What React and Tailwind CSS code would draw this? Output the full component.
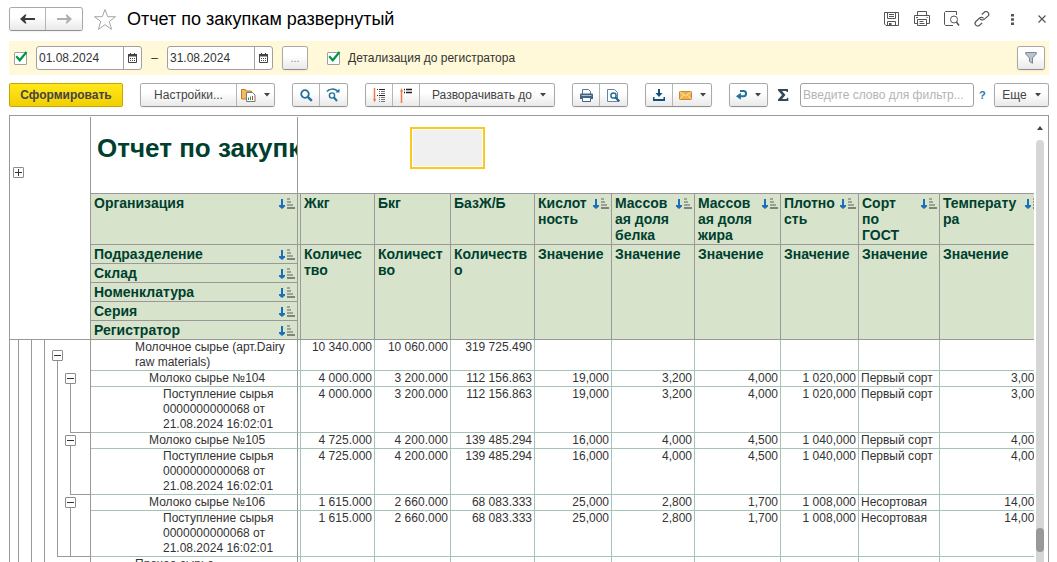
import React, { useState } from 'react';

const columns = [
  { title: 'Жкг', sub: 'Количес\nтво' },
  { title: 'Бкг', sub: 'Количест\nво' },
  { title: 'БазЖ/Б', sub: 'Количеств\nо' },
  { title: 'Кислот\nность', sub: 'Значение', sort: true },
  { title: 'Массов\nая доля\nбелка', sub: 'Значение', sort: true },
  { title: 'Массов\nая доля\nжира', sub: 'Значение', sort: true },
  { title: 'Плотно\nсть', sub: 'Значение', sort: true },
  { title: 'Сорт\nпо\nГОСТ', sub: 'Значение', sort: true },
  { title: 'Температу\nра', sub: 'Значение', sort: true },
];

const groupRows = ['Подразделение', 'Склад', 'Номенклатура', 'Серия', 'Регистратор'];

const receipt = 'Поступление сырья 0000000000068 от 21.08.2024 16:02:01';

const v104 = ['4 000.000', '3 200.000', '112 156.863', '19,000', '3,200', '4,000', '1 020,000', 'Первый сорт', '3,000'];
const v105 = ['4 725.000', '4 200.000', '139 485.294', '16,000', '4,000', '4,500', '1 040,000', 'Первый сорт', '4,000'];
const v106 = ['1 615.000', '2 660.000', '68 083.333', '25,000', '2,800', '1,700', '1 008,000', 'Несортовая', '14,000'];

// outer / inner describe the two deepest levels of the group tree:
// open = toggle, line = guide, end = guide that closes the group
const rows = [
  { name: 'Молочное сырье (арт.Dairy raw materials)', level: 0, outer: 'open', values: ['10 340.000', '10 060.000', '319 725.490', '', '', '', '', '', ''] },
  { name: 'Молоко сырье №104', level: 1, outer: 'line', inner: 'open', values: v104 },
  { name: receipt, level: 2, outer: 'line', inner: 'end', values: v104 },
  { name: 'Молоко сырье №105', level: 1, outer: 'line', inner: 'open', values: v105 },
  { name: receipt, level: 2, outer: 'line', inner: 'end', values: v105 },
  { name: 'Молоко сырье №106', level: 1, outer: 'line', inner: 'open', values: v106 },
  { name: receipt, level: 2, outer: 'end', inner: 'end', values: v106 },
  { name: 'Прочее сырье', level: 0, values: ['', '', '', '', '', '', '', '', ''] },
];

const indents = ['pl-[44px]', 'pl-[58px]', 'pl-[72px]'];

const buttonLook = 'flex items-center justify-center bg-linear-to-b from-white from-40% to-[#e9e9e9] text-[#444]';
const groupLook = 'flex h-6 shrink-0 divide-x divide-[#b5b5b5] overflow-hidden rounded-[3px] border border-[#a9a9a9] border-b-[#8f8f8f] shadow-xs';

const Caret = () => (
  <svg width="6" height="4" viewBox="0 0 6 4" fill="#444">
    <path d="M0 0h6L3 3.5z" />
  </svg>
);

const SortIcon = () => (
  <svg width="17" height="12" viewBox="0 0 17 12" className="block">
    <path d="M3 1h2v6h2v1.500L4 11 1 8.500V7h2z" fill="#1a6fb8" />
    <path d="M9 1h3M9 4h4M9 7h6" stroke="#9aa396" strokeWidth="2" />
    <path d="M9 10h8" stroke="#5f6660" strokeWidth="1.500" />
  </svg>
);

const Toggle = ({ plus, className = '' }) => (
  <button
    type="button"
    aria-label={plus ? 'Развернуть' : 'Свернуть'}
    className={`block size-[11px] shrink-0 rounded-[1px] border border-[#8c8c8c] bg-white ${className}`}
  >
    <svg width="9" height="9" viewBox="0 0 9 9" stroke="#333" className="block">
      <path d={plus ? 'M1 4.5h7M4.5 1v7' : 'M1 4.5h7'} />
    </svg>
  </button>
);

const TreeSlot = ({ kind, level }) => (
  <div className="flex w-[13px] flex-col items-end">
    {kind === 'open' && <Toggle className={level === 0 ? 'mt-[10px] -mr-[5px]' : 'mt-[2px] -mr-[5px]'} />}
    {kind && <div className="w-px grow bg-[#999]" />}
  </div>
);

const TreeCell = ({ row }) => (
  <td className="h-px border-r border-[#999] p-0">
    <div className="flex h-full">
      <div className="w-[9px] border-r border-[#999]" />
      <div className="w-[13px] border-r border-[#999]" />
      <div className="w-[13px] border-r border-[#999]" />
      <TreeSlot kind={row.outer} level={row.level} />
      <div className={`flex grow ${row.outer === 'end' ? 'border-b border-[#999]' : ''}`}>
        <TreeSlot kind={row.inner} level={row.level} />
        <div className={`grow ${row.inner === 'end' && row.outer !== 'end' ? 'border-b border-[#999]' : ''}`} />
      </div>
    </div>
  </td>
);

const Check = ({ id, label }) => (
  <span className="relative block size-[13px]">
    <input
      id={id}
      type="checkbox"
      defaultChecked
      aria-label={label}
      className="peer block size-[13px] appearance-none rounded-[1px] border border-[#a0a0a0] bg-white"
    />
    <svg
      width="13"
      height="12"
      viewBox="0 0 13 12"
      fill="none"
      stroke="#009646"
      strokeWidth="2.2"
      className="pointer-events-none absolute -top-px left-px hidden peer-checked:block"
    >
      <path d="M1.2 5.2L4.8 9.2 11.5 1" />
    </svg>
  </span>
);

const DateField = ({ label, value }) => (
  <div className="flex h-6 w-[106px] overflow-hidden rounded-[3px] border border-[#a0a0a0] bg-white">
    <input
      type="text"
      aria-label={label}
      defaultValue={value}
      className="w-full min-w-0 grow px-[2px] text-[12px] text-[#333] outline-none"
    />
    <button type="button" aria-label="Выбрать дату" className="flex w-[18px] shrink-0 items-center justify-center border-l border-[#a0a0a0]">
      <svg width="9" height="10" viewBox="0 0 9 10">
        <path d="M.5 1.5h8v8h-8z" fill="#fff" stroke="#444" />
        <path d="M0 1h9v2.5H0zM2 0h1v2H2zM6 0h1v2H6z" fill="#444" />
        <path d="M2 5.5h1M4 5.5h1M6 5.5h1M2 7.5h1M4 7.5h1M6 7.5h1" stroke="#444" />
      </svg>
    </button>
  </div>
);

const IconButton = ({ label, className = 'w-[27px]', children }) => (
  <button type="button" aria-label={label} className={`${buttonLook} ${className}`}>
    {children}
  </button>
);

const TitleBar = () => (
  <header className="flex h-6 items-center">
    <div className={groupLook}>
      <IconButton label="Назад" className="w-9">
        <svg width="15" height="10" viewBox="0 0 15 10" fill="#3c3c3c">
          <path d="M0 5L5 .5h1.500L5 4h10v2H5l1.500 3.500H5z" />
        </svg>
      </IconButton>
      <IconButton label="Вперед" className="w-9">
        <svg width="15" height="10" viewBox="0 0 15 10" fill="#b0b0b0">
          <path d="M15 5L10 .5H8.500L10 4H0v2h10L8.500 9.500H10z" />
        </svg>
      </IconButton>
    </div>
    <button type="button" aria-label="В избранное" className="ml-[10px]">
      <svg width="24" height="23" viewBox="0 0 24 23" fill="#fff" stroke="#a5a5a5" className="block">
        <path d="M12 1.5l2.7 7.2h7.8l-6.2 4.8 2.3 7.9L12 16.7l-6.6 4.7 2.3-7.9L1.5 8.7h7.8z" />
      </svg>
    </button>
    <h1 className="ml-[10px] grow truncate text-[18px] leading-6 text-black">Отчет по закупкам развернутый</h1>
    <div className="flex items-center gap-[14px] pr-[3px]">
      <button type="button" aria-label="Сохранить">
        <svg width="16" height="16" viewBox="0 0 16 16" fill="none" stroke="#555" className="block">
          <path d="M.5 1.500h14v13H2l-1.500-1.500z" />
          <path d="M3.500 1.500v6h8v-6M5 3.500h5M5 5.500h5M3.500 14.500v-4h8v4" />
          <path d="M5 12h2.500v2.500H5z" fill="#555" stroke="none" />
        </svg>
      </button>
      <button type="button" aria-label="Печать">
        <svg width="16" height="16" viewBox="0 0 16 16" fill="none" stroke="#555" className="block">
          <path d="M3.500 4.500v-4h9v4M3.500 12.500h-3v-8h15v8h-3" />
          <path d="M3.500 8.500h9v6h-9zM5.500 10.500h4M5.500 12.500h5M2 6.500h2M12.500 6.500h1" />
        </svg>
      </button>
      <button type="button" aria-label="Просмотр">
        <svg width="16" height="16" viewBox="0 0 16 16" fill="none" stroke="#555" className="block">
          <path d="M9 14.500H1.500l-1-1v-12l1-1h11v3.500" />
          <circle cx="10" cy="8.500" r="3.500" />
          <path d="M12.500 11l2.500 3.500" strokeWidth="1.500" />
        </svg>
      </button>
      <button type="button" aria-label="Ссылка">
        <svg width="16" height="16" viewBox="0 0 16 16" fill="none" stroke="#555" strokeWidth="1.200" className="block">
          <path d="M6.200 7.800a2.800 2.800 0 0 0 4 .6l3.700-3.300a2.600 2.600 0 0 0-3.600-3.800L7.800 3.500" />
          <path d="M9.600 7.400a2.800 2.800 0 0 0-4-.4L1.900 10.500a2.600 2.600 0 0 0 3.600 3.800l2.700-2.400" />
        </svg>
      </button>
      <button type="button" aria-label="Еще действия" className="flex w-4 justify-center">
        <svg width="3" height="11" viewBox="0 0 3 11" fill="#555">
          <path d="M0 0h3v2.500H0zM0 4.200h3v2.500H0zM0 8.500h3V11H0z" />
        </svg>
      </button>
      <button type="button" aria-label="Закрыть" className="flex w-3 justify-end">
        <svg width="8" height="8" viewBox="0 0 8 8" stroke="#555" strokeWidth="1.200">
          <path d="M.5.5l7 7M7.500.5l-7 7" />
        </svg>
      </button>
    </div>
  </header>
);

const FilterBar = () => (
  <div className="mt-[10px] flex h-[35px] items-center bg-[#fff9d9] pr-[4px] pl-[5px]">
    <Check id="period" label="Период" />
    <div className="ml-[9px] flex items-center gap-[9px]">
      <DateField label="Начало периода" value="01.08.2024" />
      <span className="w-[7px] text-center">–</span>
      <DateField label="Конец периода" value="31.08.2024" />
      <div className={groupLook}>
        <IconButton label="Выбрать период" className="w-6 text-[11px] text-[#888]">...</IconButton>
      </div>
    </div>
    <div className="ml-[19px] flex items-center gap-[8px]">
      <Check id="detail" />
      <label htmlFor="detail">Детализация до регистратора</label>
    </div>
    <div className={`${groupLook} ml-auto`}>
      <IconButton label="Отбор" className="w-[26px]">
        <svg width="12" height="12" viewBox="0 0 12 12" fill="#b9c3cc" stroke="#7c8790">
          <path d="M.7.5h10.600v1.500L7.500 6v5.300L4.500 9.500V6L.7 2z" />
        </svg>
      </IconButton>
    </div>
  </div>
);

const Toolbar = () => {
  const [filter, setFilter] = useState('');
  return (
    <div className="mt-[8px] flex h-6 items-center gap-[17px]">
      <button
        type="button"
        className="h-6 w-[114px] shrink-0 rounded-[2px] border border-[#c9a500] bg-linear-to-b from-[#ffe81a] to-[#f2cf00] text-[12px] font-bold text-[#444]"
      >
        Сформировать
      </button>
      <div className={groupLook}>
        <button type="button" className={`${buttonLook} w-[96px] text-[12px]`}>Настройки...</button>
        <IconButton label="Варианты отчета" className="w-[37px] gap-2">
          <svg width="15" height="14" viewBox="0 0 15 14">
            <path d="M.5 1.500h4l1 1.500h5v8H.5z" fill="#f0bc62" stroke="#b98227" />
            <path d="M5.500 4.500h6l2.500 2.500v6.500H5.500z" fill="#fff" stroke="#777" />
            <path d="M7.500 12V9.500M9.500 12V8.500" stroke="#2a9448" />
            <path d="M11.500 12v-4" stroke="#d33" />
          </svg>
          <Caret />
        </IconButton>
      </div>
      <div className={groupLook}>
        <IconButton label="Найти">
          <svg width="13" height="13" viewBox="0 0 13 13" fill="none" stroke="#21709f" strokeWidth="1.800">
            <circle cx="5" cy="5" r="3.800" />
            <path d="M7.800 7.800l4 4" strokeWidth="2.400" />
          </svg>
        </IconButton>
        <IconButton label="Найти далее">
          <svg width="15" height="14" viewBox="0 0 15 14" fill="none" stroke="#21709f">
            <path d="M1 3.500C3 .7 8 .2 11.500 2.800" strokeWidth="1.500" />
            <path d="M9.500 4.500h4v-4z" fill="#21709f" stroke="none" />
            <circle cx="6" cy="7.500" r="2.600" strokeWidth="1.400" />
            <path d="M8 9.500l3 3.500" strokeWidth="2" />
          </svg>
        </IconButton>
      </div>
      <div className={groupLook}>
        <IconButton label="Развернуть все">
          <svg width="13" height="15" viewBox="0 0 13 15" fill="none">
            <path d="M1.500 0v12" stroke="#ee7b4c" strokeWidth="1.500" />
            <path d="M0 11h3.200L1.600 14.500z" fill="#ee7b4c" />
            <path d="M4 1.500h1M6 1.500h6M4 7.500h1M6 7.500h6" stroke="#222" />
            <path d="M6 3.500h1M8 3.500h4M6 5.500h1M8 5.500h4M6 9.500h1M8 9.500h4M6 11.500h1M8 11.500h4M6 13.500h1M8 13.500h4" stroke="#777" />
          </svg>
        </IconButton>
        <IconButton label="Свернуть все">
          <svg width="13" height="15" viewBox="0 0 13 15" fill="none">
            <path d="M1.500 3v12" stroke="#ee7b4c" strokeWidth="1.500" />
            <path d="M0 3.500h3.200L1.600 0z" fill="#ee7b4c" />
            <path d="M4 1.500h1M6 1.500h6M4 4.500h1M6 4.500h6" stroke="#222" strokeWidth="1.500" />
          </svg>
        </IconButton>
        <button type="button" className={`${buttonLook} w-[134px] gap-2 pl-1 text-[12px]`}>
          Разворачивать до <Caret />
        </button>
      </div>
      <div className={groupLook}>
        <IconButton label="Печать">
          <svg width="13" height="13" viewBox="0 0 13 13">
            <path d="M2.500 5V.5h6l2 2V5" fill="#fff" stroke="#5f7486" />
            <path d="M0 5.500Q0 4.500 1 4.500h11q1 0 1 1V10H0z" fill="#3f6484" />
            <path d="M1.500 6.500h10" stroke="#a9bfd0" />
            <path d="M2.500 8.500h8v4h-8z" fill="#fff" stroke="#3f6484" />
          </svg>
        </IconButton>
        <IconButton label="Просмотр">
          <svg width="13" height="13" viewBox="0 0 13 13" fill="none">
            <path d="M.5.500h7l3 3v9H.5z" fill="#fff" stroke="#6d8496" />
            <circle cx="6.500" cy="6.500" r="2.600" stroke="#21709f" strokeWidth="1.500" />
            <path d="M8.300 8.300l4 4.200" stroke="#1b5f8c" strokeWidth="2" />
          </svg>
        </IconButton>
      </div>
      <div className={groupLook}>
        <IconButton label="Сохранить">
          <svg width="12" height="12" viewBox="0 0 12 12" fill="#14507c">
            <path d="M5 0h2v4h2.500L6 8 2.500 4H5zM0 8h1.500v2h9V8H12v4H0z" />
          </svg>
        </IconButton>
        <IconButton label="Отправить" className="w-[38px] gap-2">
          <svg width="13" height="9" viewBox="0 0 13 9">
            <path d="M.5.500h12v8H.5z" fill="#efb24c" stroke="#cb8a26" />
            <path d="M.5.500l6 4.500 6-4.500M.5 8.500L4.500 4M12.500 8.500L8.500 4" fill="none" stroke="#fbe3b0" />
          </svg>
          <Caret />
        </IconButton>
      </div>
      <div className={groupLook}>
        <IconButton label="Изменить" className="w-[37px] gap-2">
          <svg width="11" height="10" viewBox="0 0 11 10">
            <path d="M4 1h3.500a2.500 2.500 0 0 1 0 5.200H4" fill="none" stroke="#21709f" strokeWidth="2" />
            <path d="M0 6.200L4.800 2.800v7z" fill="#21709f" />
          </svg>
          <Caret />
        </IconButton>
      </div>
      <div className="-ml-[7px] flex min-w-0 grow items-center">
        <button type="button" aria-label="Сумма" className="shrink-0">
          <svg width="11" height="12" viewBox="0 0 11 12" fill="#34495a" className="block">
            <path d="M0 0h10v3H8.500V2H4l3.500 4L4 10h4.800V8.800h1.500V12H0v-1.500L4 6 0 1.500z" />
          </svg>
        </button>
        <input
          type="text"
          aria-label="Фильтр"
          placeholder="Введите слово для фильтр..."
          value={filter}
          onChange={(e) => setFilter(e.target.value)}
          className="ml-[11px] h-6 min-w-0 grow rounded-[3px] border border-[#a0a0a0] bg-white px-[2px] text-[12px] outline-none placeholder:text-[#b4b4b4]"
        />
        <a href="#help" className="ml-[5px] w-[6px] shrink-0 text-[11px] font-bold text-[#1f78b8]">?</a>
        <div className={`${groupLook} ml-[9px]`}>
          <button type="button" className={`${buttonLook} w-[53px] gap-2 text-[12px]`}>
            Еще <Caret />
          </button>
        </div>
      </div>
    </div>
  );
};

const headCell = 'border-r border-b border-[#999] bg-[#d7e4cb] py-px pr-[2px] pl-[3px] text-left align-top font-bold whitespace-pre-line';

const HeadContent = ({ title, sort }) => (
  <div className="flex items-start justify-between">
    <span>{title}</span>
    {sort && (
      <button type="button" aria-label="Сортировать" className="-ml-2 shrink-0 pt-[3px]">
        <SortIcon />
      </button>
    )}
  </div>
);

const ReportTable = () => (
  <table className="w-[1034px] table-fixed border-separate border-spacing-0 text-[12px] leading-[15px] text-[#333]">
    <colgroup>
      <col className="w-[81px]" />
      <col className="w-[207px]" />
      <col className="w-[3px]" />
      <col className="w-[74px]" />
      <col className="w-[76px]" />
      <col className="w-[84px]" />
      <col className="w-[77px]" />
      <col className="w-[83px]" />
      <col className="w-[86px]" />
      <col className="w-[78px]" />
      <col className="w-[81px]" />
      <col className="w-[104px]" />
    </colgroup>
    <thead className="text-[14px] leading-4 text-[#003f2f]">
      <tr>
        <td rowSpan={7} className="border-r border-b border-[#999] p-0 pt-[50px] pl-[3px] align-top">
          <Toggle plus />
        </td>
        <td className="h-[77px] overflow-hidden border-r border-b border-[#999] py-0 pr-0 pb-[14px] pl-[6px] text-[26px] leading-8 font-bold whitespace-nowrap">
          Отчет по закупкам
        </td>
        <td className="border-b border-[#999] p-0" />
        <td colSpan={9} className="border-b border-[#999] p-0 pt-[10px] align-top">
          <div className="ml-[109px] h-[42px] w-[75px] border-2 border-[#fac81e] bg-white p-px">
            <div className="h-full bg-[#f0f0f0]" />
          </div>
        </td>
      </tr>
      <tr>
        <th className={headCell}>
          <HeadContent title="Организация" sort />
        </th>
        <td className="border-r border-b border-[#999] bg-[#d7e4cb] p-0" />
        {columns.map((col) => (
          <th key={col.title} className={headCell}>
            <HeadContent title={col.title} sort={col.sort} />
          </th>
        ))}
      </tr>
      {groupRows.map((name, i) => (
        <tr key={name}>
          <th className={headCell}>
            <HeadContent title={name} sort />
          </th>
          {i === 0 && <td rowSpan={5} className="border-r border-b border-[#999] bg-[#d7e4cb] p-0" />}
          {i === 0 &&
            columns.map((col) => (
              <th key={col.title} rowSpan={5} className={headCell}>
                {col.sub}
              </th>
            ))}
        </tr>
      ))}
    </thead>
    <tbody>
      {rows.map((row, i) => (
        <tr key={i}>
          <TreeCell row={row} />
          <td className={`border-r border-b border-r-[#999] border-b-[#a5c4b8] p-0 pr-[6px] align-top ${indents[row.level]}`}>
            {row.name}
          </td>
          <td className="border-r border-b border-[#a5c4b8] p-0" />
          {row.values.map((value, j) => (
            <td
              key={j}
              className={`border-r border-b border-[#a5c4b8] px-[2px] py-0 align-top whitespace-nowrap ${j === 7 ? 'text-left' : 'text-right'}`}
            >
              {value}
            </td>
          ))}
        </tr>
      ))}
    </tbody>
  </table>
);

const Scrollbar = () => (
  <div className="flex w-[14px] shrink-0 flex-col items-center bg-white pt-[9px] pr-[3px]">
    <svg width="6" height="4" viewBox="0 0 6 4" fill="#444" className="shrink-0">
      <path d="M0 4h6L3 0z" />
    </svg>
    <div className="mt-[10px] flex w-2 grow flex-col justify-end rounded-t-full bg-[#d6d6d6] pb-[10px]">
      <div className="h-6 rounded-full bg-[#999]" />
    </div>
  </div>
);

const App = () => {
  return (
    <main className="flex h-screen flex-col overflow-hidden bg-white pt-[7px] pr-2 pl-[9px] font-['Liberation_Sans',Arial,sans-serif] text-[12px] text-[#333]">
      <TitleBar />
      <FilterBar />
      <Toolbar />
      <section className="mt-[8px] flex min-h-0 grow border border-b-0 border-[#999] pt-px">
        <div className="min-w-0 grow overflow-hidden">
          <ReportTable />
        </div>
        <Scrollbar />
      </section>
    </main>
  );
};

export default App;
